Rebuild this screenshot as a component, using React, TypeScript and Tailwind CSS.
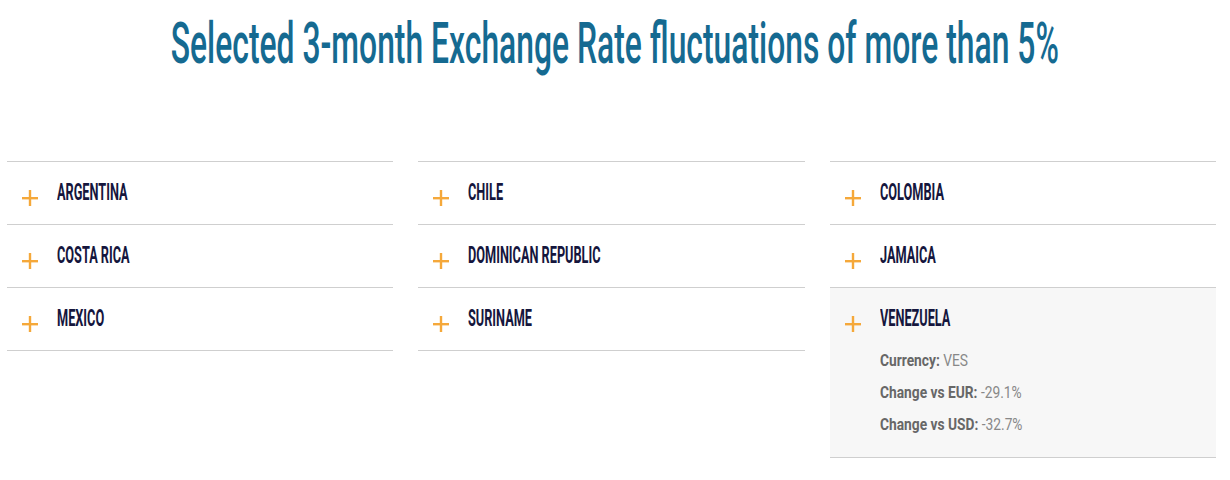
const columns: string[][] = [
  ["ARGENTINA", "COSTA RICA", "MEXICO"],
  ["CHILE", "DOMINICAN REPUBLIC", "SURINAME"],
  ["COLOMBIA", "JAMAICA", "VENEZUELA"],
];

const details: Record<string, [string, string][]> = {
  VENEZUELA: [
    ["Currency:", "VES"],
    ["Change vs EUR:", "-29.1%"],
    ["Change vs USD:", "-32.7%"],
  ],
};

function Plus() {
  return (
    <svg width="16" height="16" viewBox="0 0 16 16" className="shrink-0 mt-[28px]">
      <rect x="0" y="7" width="16" height="2.4" fill="#f5a83a" />
      <rect x="6.8" y="0" width="2.4" height="16" fill="#f5a83a" />
    </svg>
  );
}

function Row({ name }: { name: string }) {
  const open = details[name];
  return (
    <div className={`border-b border-[#cfcfcf] ${open ? "bg-[#f7f7f7] pb-[16px]" : "h-[63px]"}`}>
      <div className="flex pl-[15px]">
        <Plus />
        <div className="ml-[19px] pt-[18px]">
          <span className="inline-block origin-left scale-x-[0.53] text-[24px] leading-none font-bold text-[#15163d] whitespace-nowrap">
            {name}
          </span>
        </div>
      </div>
      {open && (
        <div className="pl-[50px] mt-[12px]">
          {open.map(([k, v]) => (
            <div key={k} className="h-[32px] leading-[32px] text-[16px] whitespace-nowrap">
              <span className="inline-block origin-left scale-x-[0.86]">
                <span className="font-bold text-[#676767]">{k}</span>{" "}
                <span className="text-[#888888]">{v}</span>
              </span>
            </div>
          ))}
        </div>
      )}
    </div>
  );
}

export default function App() {
  return (
    <div className="w-[1230px] h-[480px] bg-white overflow-hidden" style={{ fontFamily: "Roboto, 'Liberation Sans', sans-serif" }}>
      {/* Title */}
      <div className="pt-[14px] flex justify-center">
        <h1 className="shrink-0 scale-x-[0.549] text-[58px] leading-none font-medium text-[#156a91] whitespace-nowrap">
          Selected 3-month Exchange Rate fluctuations of more than 5%
        </h1>
      </div>

      {/* Accordion grid */}
      <div className="mt-[89px] ml-[7px] w-[1209px] grid grid-cols-3 gap-[25px] items-start">
        {columns.map((col, i) => (
          <div key={i} className="border-t border-[#cfcfcf]">
            {col.map((name) => (
              <Row key={name} name={name} />
            ))}
          </div>
        ))}
      </div>
    </div>
  );
}
